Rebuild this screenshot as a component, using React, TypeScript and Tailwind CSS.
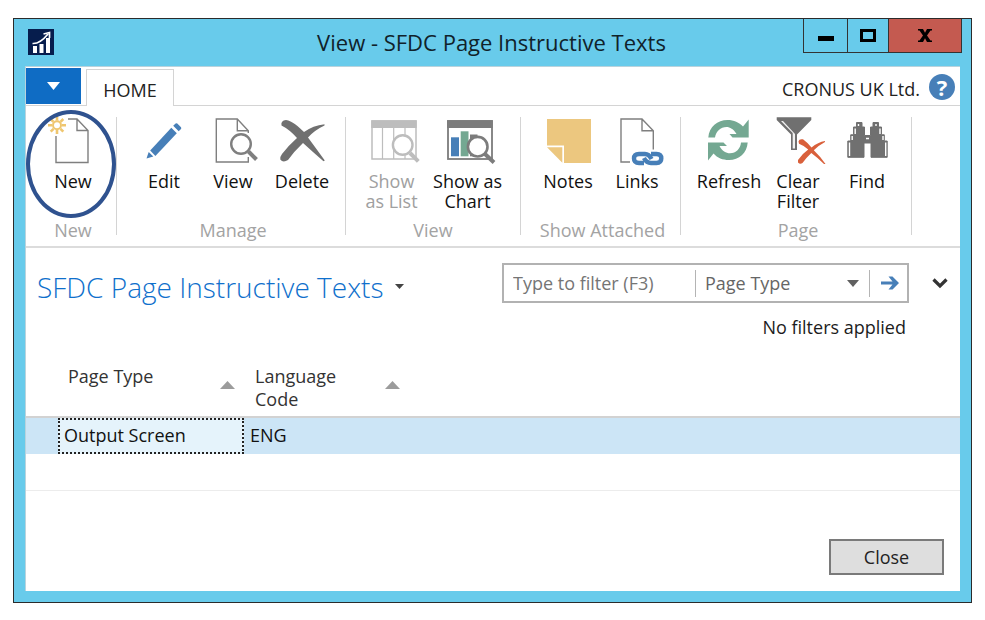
import type { ReactNode } from "react";

function NewIcon() {
  return (
    <>
      <path d="M19 3H28L39 14.5V46.5H7V20M28 3V14.5H39" fill="none" stroke="#7f7f7f" strokeWidth="1.4" />
      <g fill="none" stroke="#efc66f" strokeWidth="2.6">
        <circle cx="8" cy="9.3" r="4" strokeWidth="2" />
        <path d="M8 .5V4.5M8 14V18M-1 9.3H3M13 9.3H17M1.7 3L4.5 5.8M11.5 12.8L14.3 15.6M1.7 15.6L4.5 12.8M11.5 5.8L14.3 3" />
      </g>
    </>
  );
}

function EditIcon() {
  return (
    <g fill="#477fb8">
      <path d="M10.2 34.4L31.3 11.8L36.8 17.2L15.4 40Z" />
      <path d="M33.2 9.8L35.6 7.4Q36.5 6.8 37.3 7.6L41 11.3Q41.6 12.2 41 13L38.7 15.3Z" />
      <path d="M8.7 36L13.3 40.4L6.5 42.6Z" />
    </g>
  );
}

function ViewIcon() {
  return (
    <g fill="none" stroke="#7f7f7f">
      <path d="M39.3 17V14.7L28.3 3H7.3V46H39.3V41M28.3 3V14.7H39.3" strokeWidth="1.4" />
      <circle cx="32" cy="28" r="9.8" strokeWidth="2.4" fill="#fff" />
      <path d="M39.5 35.5L47.5 43.5" strokeWidth="4" />
    </g>
  );
}

function DeleteIcon() {
  return (
    <path
      fill="#707070"
      d="M3.500 9.500Q2.500 4.500 8 4C14 5 20.500 10.500 26 16Q35 9.500 46.500 8.200V9.600Q37 14 30 21.500Q38.500 33 46.800 44.500L45.500 45.300Q36 37 25 27Q16 35.500 10 44Q5 47 2.300 43.500Q2 40.500 4 38Q11 29 19 22Q11.500 13.500 3.500 9.500Z"
    />
  );
}

function ShowListIcon() {
  return (
    <g fill="none" stroke="#bdbdbd">
      <rect x="4" y="5" width="44" height="38" strokeWidth="1.500" />
      <path d="M3.300 4.300H48.700V12H3.300Z" fill="#bdbdbd" stroke="none" />
      <path d="M14.500 12V43M25.700 12V43M37 12V43" strokeWidth="1.200" />
      <circle cx="34.700" cy="29" r="9.800" fill="#fff" strokeWidth="2.400" />
      <path d="M42 37L50.300 45.300" strokeWidth="4" />
    </g>
  );
}

function ShowChartIcon() {
  return (
    <g fill="none" stroke="#7c7c7c">
      <rect x="4" y="5" width="44" height="38" strokeWidth="1.800" />
      <path d="M3 4.300H48.700V12H3Z" fill="#7c7c7c" stroke="none" />
      <path d="M7 21.300H15V40.300H7Z" fill="#477fb8" stroke="none" />
      <path d="M16.700 15.300H24.500V40.300H16.700Z" fill="#74a892" stroke="none" />
      <path d="M26 18.500H33.500V40.300H26Z" fill="#7c7c7c" stroke="none" />
      <circle cx="33.700" cy="30.700" r="9.800" fill="#fff" strokeWidth="2.600" />
      <path d="M41 38L50 46.500" strokeWidth="4" />
    </g>
  );
}

function NotesIcon() {
  return (
    <g fill="#ecc77f">
      <path d="M3 3H47V47H20V29.500H3Z" />
      <path d="M3 31.300H18.300V46.700Z" />
    </g>
  );
}

function LinksIcon() {
  return (
    <g fill="none">
      <path d="M17 46H8V3H29L40.300 14.700V33.500M29 3V14.700H40.300" stroke="#7f7f7f" strokeWidth="1.400" />
      <g stroke="#477fb8" strokeWidth="4.400" strokeLinejoin="round">
        <path d="M31 47H26Q21 47 21 42.600Q21 38 26 38H32Q36 38 38.500 43" />
        <path d="M38 38H43.500Q48.300 38 48.300 42.600Q48.300 47 43.500 47H38Q33.500 47 31 42" />
      </g>
    </g>
  );
}

function RefreshIcon() {
  return (
    <g fill="#74a892">
      <path d="M3.300 21.500C4 11 12.500 4 22.500 4C29 4 34 6.500 38 10.500L43.700 3.500V21.500H27.500L24.500 18H31.500C28.500 13 25 11 21.500 11C15.500 11 11 15.500 10 21.500Z" />
      <path d="M42.700 26.500C42 37 34 44 24 44C17.500 44 12.500 42 8.500 37.500L3 44.500V26.500H18.500L22 30H14.500C17 35 21 37.300 25 37.300C31 37.300 35.500 32.500 36 26.500Z" />
    </g>
  );
}

function ClearFilterIcon() {
  return (
    <>
      <path d="M2.700 1.300H37.300V4L23 18.500V34H17V18.500L2.700 4Z" fill="#707070" />
      <path d="M7 5L18.700 17V32.500H21V18L9 5Z" fill="#f0f0f0" />
      <path
        fill="#d9603b"
        d="M24.500 25.500Q25 22.500 29 23.300Q34 27 37.500 31.500Q44 26 51 25V26Q44.500 29.500 39.800 34.200Q46 40 51.500 48H50Q44 42 37.300 37Q32 42 28.500 47Q26 48.700 24 46.500V44Q28.500 37.500 34.200 33.500Q30 29.500 25 27.700Z"
      />
    </>
  );
}

function FindIcon() {
  return (
    <>
      <path
        d="M4.800 41.300V25H7.700V18.800H10.500V11H13.500V6.500H19V11H21.500V19.500H27.500V11H30V6.500H35.500V11H38.500V18.800H41.300V25H44.200V41.300H28V27H21V41.300Z"
        fill="#707070"
        stroke="#707070"
      />
      <path
        d="M6.500 40V26.500M9.200 24V20M12.200 18V12.500M15.500 10V8M33 10V8M37 18V12.500M40 24V20M42.700 40V26.500M23 22.500H26"
        fill="none"
        stroke="#fff"
        strokeWidth="1.400"
      />
    </>
  );
}

type Action = { label: string; icon: ReactNode; wide?: boolean; disabled?: boolean };
type Group = { name: string; className: string; actions: Action[] };

const groups: Group[] = [
  { name: "New", className: "w-[90px] pl-1", actions: [{ label: "New", icon: <NewIcon /> }] },
  {
    name: "Manage",
    className: "w-[228px] pl-1",
    actions: [
      { label: "Edit", icon: <EditIcon /> },
      { label: "View", icon: <ViewIcon /> },
      { label: "Delete", icon: <DeleteIcon /> },
    ],
  },
  {
    name: "View",
    className: "w-[174px]",
    actions: [
      { label: "Show\nas List", icon: <ShowListIcon />, disabled: true },
      { label: "Show as\nChart", icon: <ShowChartIcon />, wide: true },
    ],
  },
  {
    name: "Show Attached",
    className: "w-[159px] pl-1",
    actions: [
      { label: "Notes", icon: <NotesIcon /> },
      { label: "Links", icon: <LinksIcon /> },
    ],
  },
  {
    name: "Page",
    className: "w-[230px] pl-1",
    actions: [
      { label: "Refresh", icon: <RefreshIcon /> },
      { label: "Clear\nFilter", icon: <ClearFilterIcon /> },
      { label: "Find", icon: <FindIcon /> },
    ],
  },
];

function RibbonButton({ label, icon, wide, disabled }: Action) {
  return (
    <button
      type="button"
      disabled={disabled}
      className={`flex flex-col items-center whitespace-pre text-center leading-5 ${wide ? "w-[83px]" : "w-[69px]"} ${disabled ? "text-[#a0a0a0]" : "text-[#111]"}`}
    >
      <svg width="48" height="54" viewBox="0 0 48 54" className="mb-px shrink-0 overflow-visible" aria-hidden="true">
        {icon}
      </svg>
      {label}
    </button>
  );
}

function Ribbon() {
  return (
    <div className="flex h-[142px] shrink-0 border-b-2 border-[#dcdcdc] pt-[10px]">
      {groups.map((group, index) => (
        <div key={group.name} className="flex">
          <section aria-label={group.name} className={`relative flex flex-col items-center ${group.className}`}>
            <div className="flex h-[104px] items-start">
              {group.actions.map((action) => (
                <RibbonButton key={action.label} {...action} />
              ))}
            </div>
            <div className="whitespace-nowrap leading-5 text-[#a3a3a3]">{group.name}</div>
            {index === 0 && (
              <div className="pointer-events-none absolute -top-[6px] left-0 h-[108px] w-[90px] rounded-[50%] border-4 border-[#2f528f]" />
            )}
          </section>
          <div className="mt-px h-[118px] w-px bg-[#d4d4d4]" />
        </div>
      ))}
    </div>
  );
}

function TitleBar() {
  return (
    <header className="flex h-[47px] shrink-0 items-start">
      <svg width="26" height="26" viewBox="0 0 26 26" className="mt-[10px] ml-[14px] shrink-0" aria-hidden="true">
        <path d="M0 0H26V26H0Z" fill="#061d4d" />
        <path d="M5 17H9V24H5ZM11.500 15H15.500V24H11.500ZM18 9H22V24H18Z" fill="#fff" />
        <path d="M4.500 14.500Q12 15 20 5M15.500 5L21.500 3.500L21.500 9" fill="none" stroke="#fff" strokeWidth="1.700" />
      </svg>
      <h1 className="flex-1 pt-[7px] pl-[126px] text-center text-[22px] leading-8 text-[#10222a]">
        View - SFDC Page Instructive Texts
      </h1>
      <div className="mr-[9px] flex h-[34px] border border-t-0 border-[#333]">
        <button type="button" aria-label="Minimize" className="flex w-11 items-center justify-center border-r border-[#333]">
          <span className="mt-[6px] h-[5px] w-4 bg-black" />
        </button>
        <button type="button" aria-label="Maximize" className="flex w-[41px] items-center justify-center border-r border-[#333]">
          <span className="h-[13px] w-4 border-[3px] border-black" />
        </button>
        <button type="button" aria-label="Close window" className="flex w-[72px] items-center justify-center bg-[#c45a50]">
          <svg width="14" height="13" viewBox="0 0 14 13" aria-hidden="true">
            <path d="M0 0H5L7 3.700L9 0H14V1.500H12.500L9 6.500L12.500 11.500H14V13H9L7 9.300L5 13H0V11.500H1.500L5 6.500L1.500 1.500H0Z" fill="#000" />
          </svg>
        </button>
      </div>
    </header>
  );
}

function TabBar() {
  return (
    <nav className="flex h-[39px] shrink-0 items-end border-b border-[#d4d4d4]">
      <button type="button" aria-label="Application menu" className="mb-px flex h-9 w-[55px] items-center justify-center bg-[#0f6cc4]">
        <svg width="13" height="8" viewBox="0 0 13 8" aria-hidden="true">
          <path d="M0 0H13L6.500 8Z" fill="#fff" />
        </svg>
      </button>
      <button type="button" className="-mb-px ml-[5px] h-[37px] w-[88px] border border-b-0 border-[#d4d4d4] bg-white pt-1 text-[#222]">
        HOME
      </button>
      <div className="ml-auto flex h-9 items-start pr-[5px]">
        <span className="mt-[8px] mr-[9px] leading-6 text-[#222]">CRONUS UK Ltd.</span>
        <button type="button" aria-label="Help" className="mt-[5px] flex size-[26px] items-center justify-center rounded-full bg-[#477fb8] text-[22px] leading-none font-bold text-white">
          ?
        </button>
      </div>
    </nav>
  );
}

function FilterPane() {
  return (
    <div className="flex h-[100px] shrink-0 items-start justify-between pt-[15px] pl-[11px]">
      <h2 className="flex items-center text-[28px] leading-10 font-light text-[#0f70cc]">
        <span className="pt-1">SFDC Page Instructive Texts</span>
        <button type="button" aria-label="List options" className="mt-[2px] ml-[11px]">
          <svg width="9" height="5" viewBox="0 0 9 5" aria-hidden="true" className="block">
            <path d="M0 0H9L4.500 5Z" fill="#444" />
          </svg>
        </button>
      </h2>
      <div className="flex items-start">
        <div className="w-[407px]">
          <div className="flex h-10 items-center border-2 border-[#b2b2b2] text-[#666]">
            <input
              aria-label="Type to filter (F3)"
              placeholder="Type to filter (F3)"
              className="w-[191px] bg-transparent pl-[9px] outline-none placeholder:text-[#757575]"
            />
            <span className="h-[27px] w-px bg-[#b4b4b4]" />
            <select aria-label="Filter column" className="min-w-0 flex-1 appearance-none bg-transparent pl-[9px] outline-none">
              <option>Page Type</option>
              <option>Language Code</option>
            </select>
            <svg width="12" height="7" viewBox="0 0 12 7" aria-hidden="true" className="pointer-events-none mr-[10px]">
              <path d="M0 0H12L6 7Z" fill="#606060" />
            </svg>
            <span className="h-[27px] w-px bg-[#b4b4b4]" />
            <button type="button" aria-label="Apply filter" className="flex w-[37px] items-center justify-center pl-[2px]">
              <svg width="18" height="14" viewBox="0 0 18 14" aria-hidden="true">
                <path d="M0 5.500H11.500L7.500 0.500H11.500L18 7L11.500 13.500H7.500L11.500 8.500H0Z" fill="#477fb8" />
              </svg>
            </button>
          </div>
          <p className="pt-[12px] pr-[3px] text-right leading-6 text-[#1c1c1c]">No filters applied</p>
        </div>
        <button type="button" aria-label="Expand filters" className="mr-[12px] ml-[23px] flex h-10 items-center">
          <svg width="16" height="11" viewBox="0 0 16 11" fill="none" aria-hidden="true">
            <path d="M1.500 1.500L8 8L14.500 1.500" stroke="#333" strokeWidth="3.200" />
          </svg>
        </button>
      </div>
    </div>
  );
}

function SortMark() {
  return (
    <svg width="15" height="8" viewBox="0 0 15 8" aria-hidden="true" className="mt-4 shrink-0">
      <path d="M0 8L7.500 0L15 8Z" fill="#9c9c9c" />
    </svg>
  );
}

function RecordTable() {
  return (
    <table className="w-full table-fixed border-collapse text-left">
      <colgroup>
        <col className="w-8" />
        <col className="w-[187px]" />
        <col className="w-[160px]" />
        <col />
      </colgroup>
      <thead>
        <tr className="h-[69px] border-b-2 border-[#d2d2d2] align-top font-normal text-[#333]">
          <td />
          <th scope="col" className="pt-[17px] pl-[10px] font-normal">
            <div className="flex justify-between pr-[10px] leading-[23px]">
              Page Type
              <SortMark />
            </div>
          </th>
          <th scope="col" className="pt-[17px] pl-[10px] font-normal">
            <div className="flex justify-between pr-[5px] leading-[23px]">
              <span>
                Language
                <br />
                Code
              </span>
              <SortMark />
            </div>
          </th>
          <td />
        </tr>
      </thead>
      <tbody>
        <tr className="h-9 bg-[#cce5f6] leading-8 text-[#111]">
          <td />
          <td className="p-0 pr-px">
            <div className="h-9 border-2 border-dotted border-[#222] bg-[#e5f3fb] pl-1 leading-[30px]">Output Screen</div>
          </td>
          <td className="pb-[2px] pl-[5px]">ENG</td>
          <td />
        </tr>
        <tr className="h-9 border-b border-[#ececec]">
          <td colSpan={4} />
        </tr>
      </tbody>
    </table>
  );
}

export default function App() {
  return (
    <div className="flex min-h-screen flex-col bg-white px-[13px] pt-[18px] pb-[17px] font-['Open_Sans','Noto_Sans',sans-serif] text-[18px]">
      <div className="flex flex-1 flex-col border border-[#2b2b2b] bg-[#68cbeb]">
        <TitleBar />
        <main className="mx-[11px] mb-[11px] flex flex-1 flex-col border-t border-l border-[#b9d3dd] bg-white">
          <TabBar />
          <Ribbon />
          <FilterPane />
          <RecordTable />
          <footer className="mt-auto flex justify-end pr-4 pb-4">
            <button type="button" className="h-9 w-[115px] border-2 border-[#7a7a7a] bg-[#dedede] text-[#222]">
              Close
            </button>
          </footer>
        </main>
      </div>
    </div>
  );
}
